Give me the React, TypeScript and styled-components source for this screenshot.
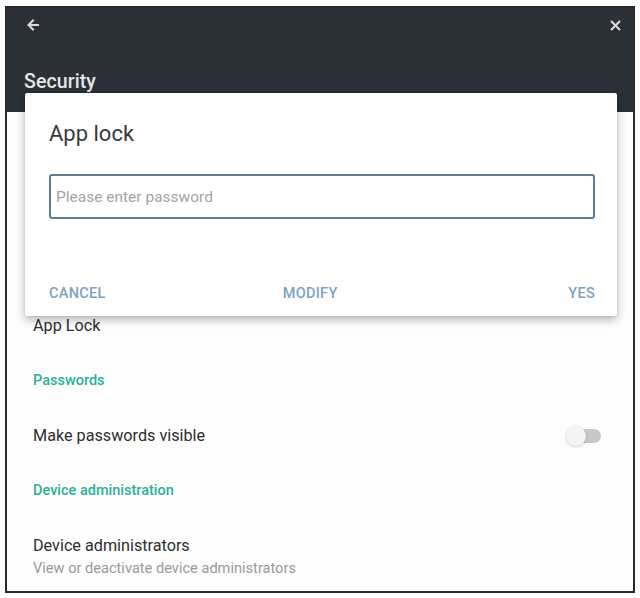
import React from "react";
import styled, { createGlobalStyle } from "styled-components";

const Global = createGlobalStyle`
  html, body { margin: 0; padding: 0; background: #ffffff; }
  body { font-family: Roboto, "Noto Sans", "Liberation Sans", sans-serif; }
  * { box-sizing: border-box; }
`;

const Page = styled.div`
  width: 640px;
  height: 598px;
  padding: 6px 5px 5px 5px;
  background: #ffffff;
`;

const Frame = styled.div`
  position: relative;
  width: 630px;
  height: 587px;
  border: 2px solid #2a2a2a;
  background: #fdfdfd;
  display: flex;
  flex-direction: column;
  overflow: hidden;
`;

const Header = styled.header`
  height: 104px;
  background: #2b3137;
  display: flex;
  flex-direction: column;
  padding: 10px 12px 0 20px;
`;

const TopRow = styled.div`
  display: flex;
  justify-content: space-between;
  align-items: center;
  height: 14px;
  color: #d9dde0;
`;

const Title = styled.h1`
  margin: 38px 0 0 -3px;
  font-size: 19.5px;
  font-weight: 500;
  color: #e4e6e8;
  letter-spacing: 0.1px;
`;

const List = styled.div`
  display: flex;
  flex-direction: column;
  padding: 186px 0 0 26px;
  flex: 1;
`;

const Row = styled.div<{ $h: number }>`
  height: ${(p) => p.$h}px;
  display: flex;
  align-items: center;
  justify-content: space-between;
  padding-right: 32px;
`;

const ItemTitle = styled.div`
  font-size: 16.2px;
  color: #2e2e2e;
`;

const Category = styled.div`
  font-size: 14.5px;
  font-weight: 500;
  color: #2fae98;
`;

const Stack = styled.div`
  display: flex;
  flex-direction: column;
  gap: 4px;
  margin-top: 10px;
`;

const Summary = styled.div`
  font-size: 14.6px;
  color: #9a9a9a;
`;

const Track = styled.div`
  position: relative;
  width: 34px;
  height: 14px;
  border-radius: 7px;
  background: #c8c8c8;
`;

const Thumb = styled.div`
  position: absolute;
  left: -1px;
  top: -3px;
  width: 20px;
  height: 20px;
  border-radius: 50%;
  background: #f4f4f4;
  box-shadow: 0 1px 3px rgba(0, 0, 0, 0.2);
`;

const Dialog = styled.div`
  position: absolute;
  left: 18px;
  top: 85px;
  width: 592px;
  height: 223px;
  background: #ffffff;
  border-radius: 2px;
  box-shadow: 0 4px 10px rgba(0, 0, 0, 0.28), 0 0 2px rgba(0, 0, 0, 0.15);
  padding: 28px 22px 0 24px;
  display: flex;
  flex-direction: column;
`;

const DialogTitle = styled.div`
  font-size: 22px;
  color: #3a3a3a;
  height: 26px;
  line-height: 26px;
`;

const Input = styled.input`
  margin-top: 27px;
  height: 45px;
  width: 100%;
  border: 2px solid #5d7d92;
  border-radius: 3px;
  padding: 0 5px;
  font-family: inherit;
  font-size: 15.5px;
  color: #333;
  outline: none;
  &::placeholder { color: #a4a4a4; }
`;

const Actions = styled.div`
  margin-top: 66px;
  display: flex;
  align-items: center;
`;

const Action = styled.span<{ $gap?: string }>`
  font-size: 14.5px;
  font-weight: 500;
  color: #7ea2c1;
  letter-spacing: 0.3px;
  margin-left: ${(p) => p.$gap ?? "0"};
`;

export default function App() {
  return (
    <Page>
      <Global />
      <Frame>
        <Header>
          <TopRow>
            <svg width="12" height="12" viewBox="0 0 12 12" fill="none" stroke="currentColor" strokeWidth="2" strokeLinecap="square">
              <path d="M11 6H2M6 1.5L1.5 6L6 10.5" />
            </svg>
            <svg width="11" height="11" viewBox="0 0 11 11" fill="none" stroke="currentColor" strokeWidth="2">
              <path d="M1 1L10 10M10 1L1 10" />
            </svg>
          </TopRow>
          <Title>Security</Title>
        </Header>
        <List>
          <Row $h={55}><ItemTitle>App Lock</ItemTitle></Row>
          <Row $h={55}><Category>Passwords</Category></Row>
          <Row $h={55}>
            <ItemTitle>Make passwords visible</ItemTitle>
            <Track><Thumb /></Track>
          </Row>
          <Row $h={55}><Category>Device administration</Category></Row>
          <Row $h={66}>
            <Stack>
              <ItemTitle>Device administrators</ItemTitle>
              <Summary>View or deactivate device administrators</Summary>
            </Stack>
          </Row>
        </List>
        <Dialog>
          <DialogTitle>App lock</DialogTitle>
          <Input placeholder="Please enter password" />
          <Actions>
            <Action>CANCEL</Action>
            <Action $gap="177px">MODIFY</Action>
            <Action $gap="auto">YES</Action>
          </Actions>
        </Dialog>
      </Frame>
    </Page>
  );
}
